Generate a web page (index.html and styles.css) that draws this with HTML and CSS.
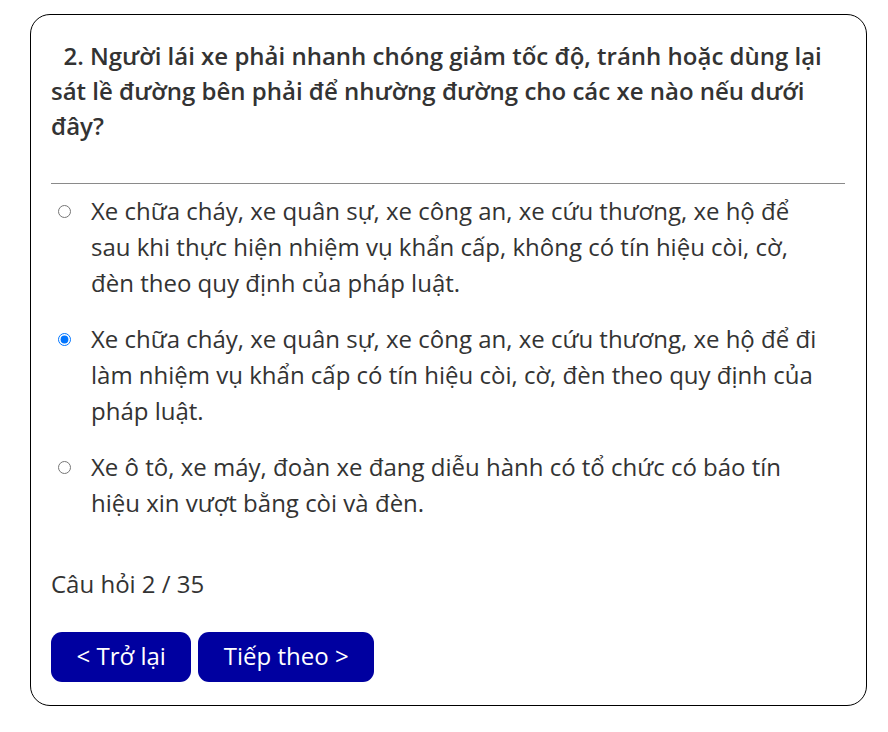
FILE: index.html
```html
<!DOCTYPE html>
<html lang="vi">
<head>
<meta charset="utf-8">
<title>Câu hỏi 2 / 35</title>
<link rel="stylesheet" href="styles.css">
</head>
<body>
<div class="card">
  <div class="question">&nbsp;&nbsp;2. Người lái xe phải nhanh chóng giảm tốc độ, tránh hoặc dùng lại sát lề đường bên phải để nhường đường cho các xe nào nếu dưới đây?</div>
  <hr class="divider">
  <div class="options">
    <label class="option"><input type="radio" name="q2" class="radio"><span class="option-text">Xe chữa cháy, xe quân sự, xe công an, xe cứu thương, xe hộ để sau khi thực hiện nhiệm vụ khẩn cấp, không có tín hiệu còi, cờ, đèn theo quy định của pháp luật.</span></label>
    <label class="option"><input type="radio" name="q2" class="radio" checked><span class="option-text">Xe chữa cháy, xe quân sự, xe công an, xe cứu thương, xe hộ để đi làm nhiệm vụ khẩn cấp có tín hiệu còi, cờ, đèn theo quy định của pháp luật.</span></label>
    <label class="option"><input type="radio" name="q2" class="radio"><span class="option-text">Xe ô tô, xe máy, đoàn xe đang diễu hành có tổ chức có báo tín hiệu xin vượt bằng còi và đèn.</span></label>
  </div>
  <div class="counter">Câu hỏi 2 / 35</div>
  <div class="actions">
    <button class="btn">&lt; Trở lại</button>
    <button class="btn">Tiếp theo &gt;</button>
  </div>
</div>
</body>
</html>
```

FILE: styles.css
```css
html, body {
  margin: 0;
  padding: 0;
  background: #ffffff;
}
body {
  padding: 14px 21px 0 30px;
  font-family: "Open Sans", "Liberation Sans", sans-serif;
  color: #333333;
  font-size: 24px;
  line-height: 35px;
}
.card {
  border: 1px solid #000000;
  border-radius: 20px;
  padding: 23px 21px 23px 20px;
  width: 837px;
  box-sizing: border-box;
}
.question {
  font-weight: 600;
  margin-bottom: 40px;
}
.divider {
  border: 0;
  border-top: 1px solid #8a8a8a;
  margin: 0 0 9px 0;
  height: 0;
}
.options {
  display: flex;
  flex-direction: column;
  gap: 20px;
}
.option {
  display: flex;
  align-items: flex-start;
  line-height: 36px;
}
.radio {
  width: 13px;
  height: 13px;
  margin: 12px 20px 0 7px;
  flex: none;
}
.option-text {
  padding-right: 26px;
}
.counter {
  margin-top: 45px;
}
.actions {
  display: flex;
  gap: 7px;
  margin-top: 31px;
}
.btn {
  height: 50px;
  padding: 0 25.5px 4px;
  border: 0;
  border-radius: 11px;
  background: #0000a0;
  color: #ffffff;
  font-family: "Open Sans", "Liberation Sans", sans-serif;
  font-size: 24px;
}
```
